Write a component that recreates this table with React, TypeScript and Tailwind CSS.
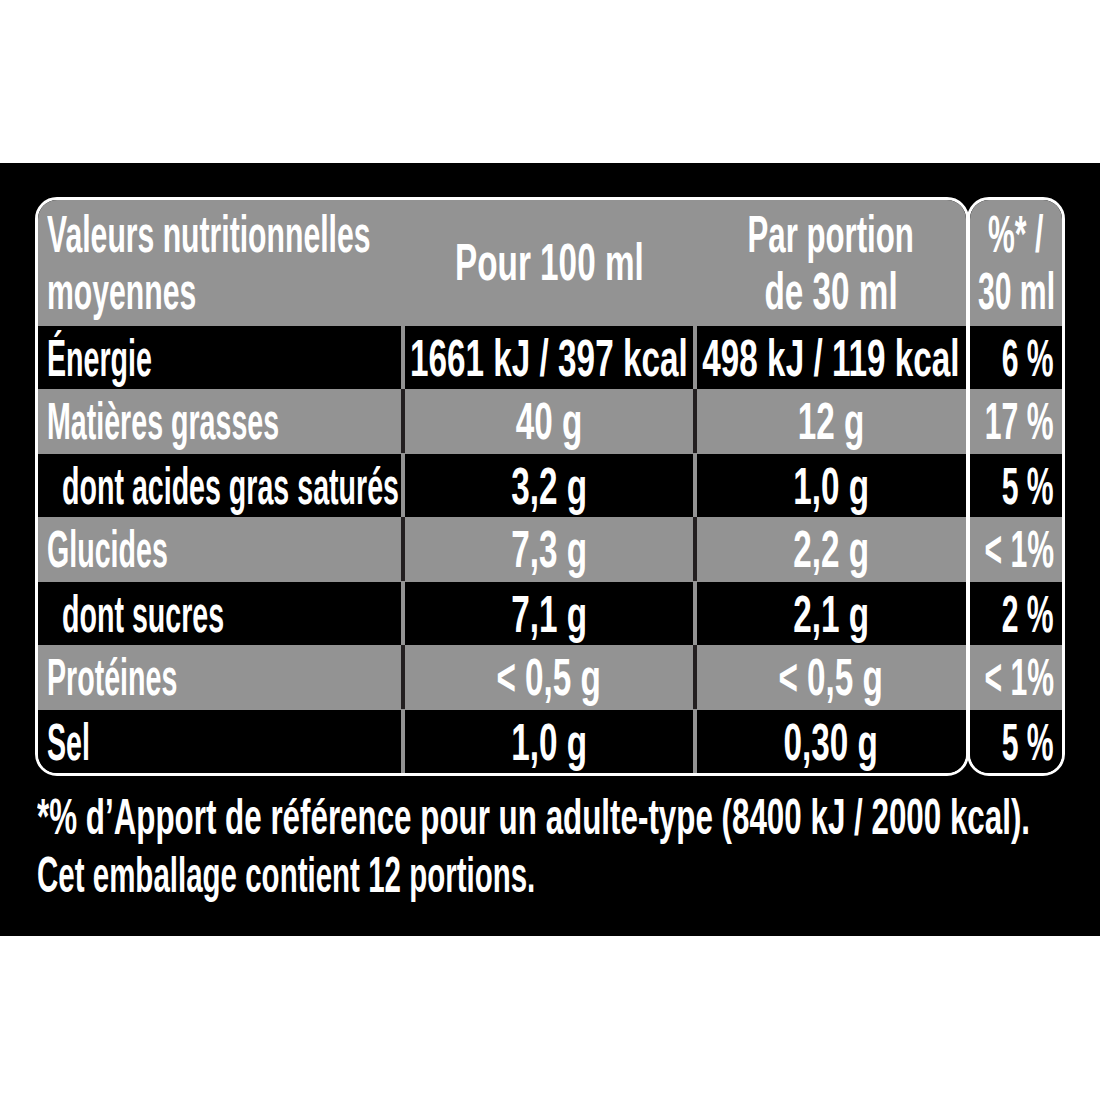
import React from 'react';

const GRAY = 'bg-[#939393]';

interface Row {
  label: string;
  per100: string;
  perPortion: string;
  pct: string;
  gray?: boolean;
  sub?: boolean;
}

const rows: Row[] = [
  { label: 'Énergie', per100: '1661 kJ / 397 kcal', perPortion: '498 kJ / 119 kcal', pct: '6 %' },
  { label: 'Matières grasses', per100: '40 g', perPortion: '12 g', pct: '17 %', gray: true },
  { label: 'dont acides gras saturés', per100: '3,2 g', perPortion: '1,0 g', pct: '5 %', sub: true },
  { label: 'Glucides', per100: '7,3 g', perPortion: '2,2 g', pct: '< 1%', gray: true },
  { label: 'dont sucres', per100: '7,1 g', perPortion: '2,1 g', pct: '2 %', sub: true },
  { label: 'Protéines', per100: '< 0,5 g', perPortion: '< 0,5 g', pct: '< 1%', gray: true },
  { label: 'Sel', per100: '1,0 g', perPortion: '0,30 g', pct: '5 %' },
];

// texte condensé : la police est écrasée horizontalement
// sx = classe scale-x complète (label / chiffres / en-tête)
function T({
  children,
  origin = 'left',
  sx = 'scale-x-[0.58]',
}: {
  children: React.ReactNode;
  origin?: 'left' | 'center' | 'right';
  sx?: string;
}) {
  const o = origin === 'left' ? 'origin-left' : origin === 'center' ? 'origin-center' : 'origin-right';
  return <span className={`inline-block whitespace-nowrap ${sx} ${o}`}>{children}</span>;
}

const LABEL = 'scale-x-[0.55]';
const NUM = 'scale-x-[0.64]';

export default function App() {
  return (
    <div
      className="w-[1100px] h-[1100px] bg-white overflow-hidden text-white font-bold"
      style={{ fontFamily: '"Liberation Sans", Arial, sans-serif' }}
    >
      <div className="mt-[163px] h-[773px] bg-black pt-[34px] pl-[35px]">
        {/* tableau */}
        <div className="flex">
          {/* partie principale */}
          <div className="w-[934px] border-[3px] border-white rounded-[22px] overflow-hidden">
            <div className={`${GRAY} h-[125px] grid grid-cols-[363px_292px_272px] text-[52px] leading-[57px]`}>
              <div className="flex flex-col justify-center pl-[9px]">
                <T>Valeurs nutritionnelles</T>
                <T>moyennes</T>
              </div>
              <div className="flex items-center justify-center pl-[4px]">
                <T origin="center" sx={NUM}>Pour 100 ml</T>
              </div>
              <div className="flex flex-col items-center justify-center pl-[4px]">
                <T origin="center" sx="scale-x-[0.6]">Par portion</T>
                <T origin="center" sx={NUM}>de 30 ml</T>
              </div>
            </div>
            {rows.map((r) => (
              <div
                key={r.label}
                className={`h-[64px] grid grid-cols-[363px_292px_272px] text-[52px] leading-none ${
                  r.gray ? GRAY : 'bg-black border-t border-[#939393]'
                }`}
              >
                <div className={`flex items-center ${r.sub ? 'pl-[24px]' : 'pl-[9px]'}`}>
                  <T sx={LABEL}>{r.label}</T>
                </div>
                <div
                  className={`flex items-center justify-center border-l-4 ${
                    r.gray ? 'border-[#231f20]' : 'border-[#939393]'
                  }`}
                >
                  <T origin="center" sx={NUM}>{r.per100}</T>
                </div>
                <div
                  className={`flex items-center justify-center border-l-4 ${
                    r.gray ? 'border-[#231f20]' : 'border-[#939393]'
                  }`}
                >
                  <T origin="center" sx={NUM}>{r.perPortion}</T>
                </div>
              </div>
            ))}
          </div>

          {/* colonne %AR */}
          <div className="w-[98px] -ml-[2px] border-[3px] border-white rounded-[22px] overflow-hidden">
            <div className={`${GRAY} h-[125px] flex flex-col items-center justify-center text-[52px] leading-[57px]`}>
              <T origin="center">%* /</T>
              <T origin="center">30 ml</T>
            </div>
            {rows.map((r) => (
              <div
                key={r.label}
                className={`h-[64px] flex items-center justify-end pr-[8px] text-[52px] leading-none ${
                  r.gray ? GRAY : 'bg-black border-t border-[#939393]'
                }`}
              >
                <T origin="right">{r.pct}</T>
              </div>
            ))}
          </div>
        </div>

        {/* notes */}
        <div className="mt-[12px] pl-[2px] text-[50px] leading-[58px]">
          <div>
            <T sx="scale-x-[0.627]">*% d’Apport de référence pour un adulte-type (8400 kJ / 2000 kcal).</T>
          </div>
          <div>
            <T sx="scale-x-[0.59]">Cet emballage contient 12 portions.</T>
          </div>
        </div>
      </div>
    </div>
  );
}
